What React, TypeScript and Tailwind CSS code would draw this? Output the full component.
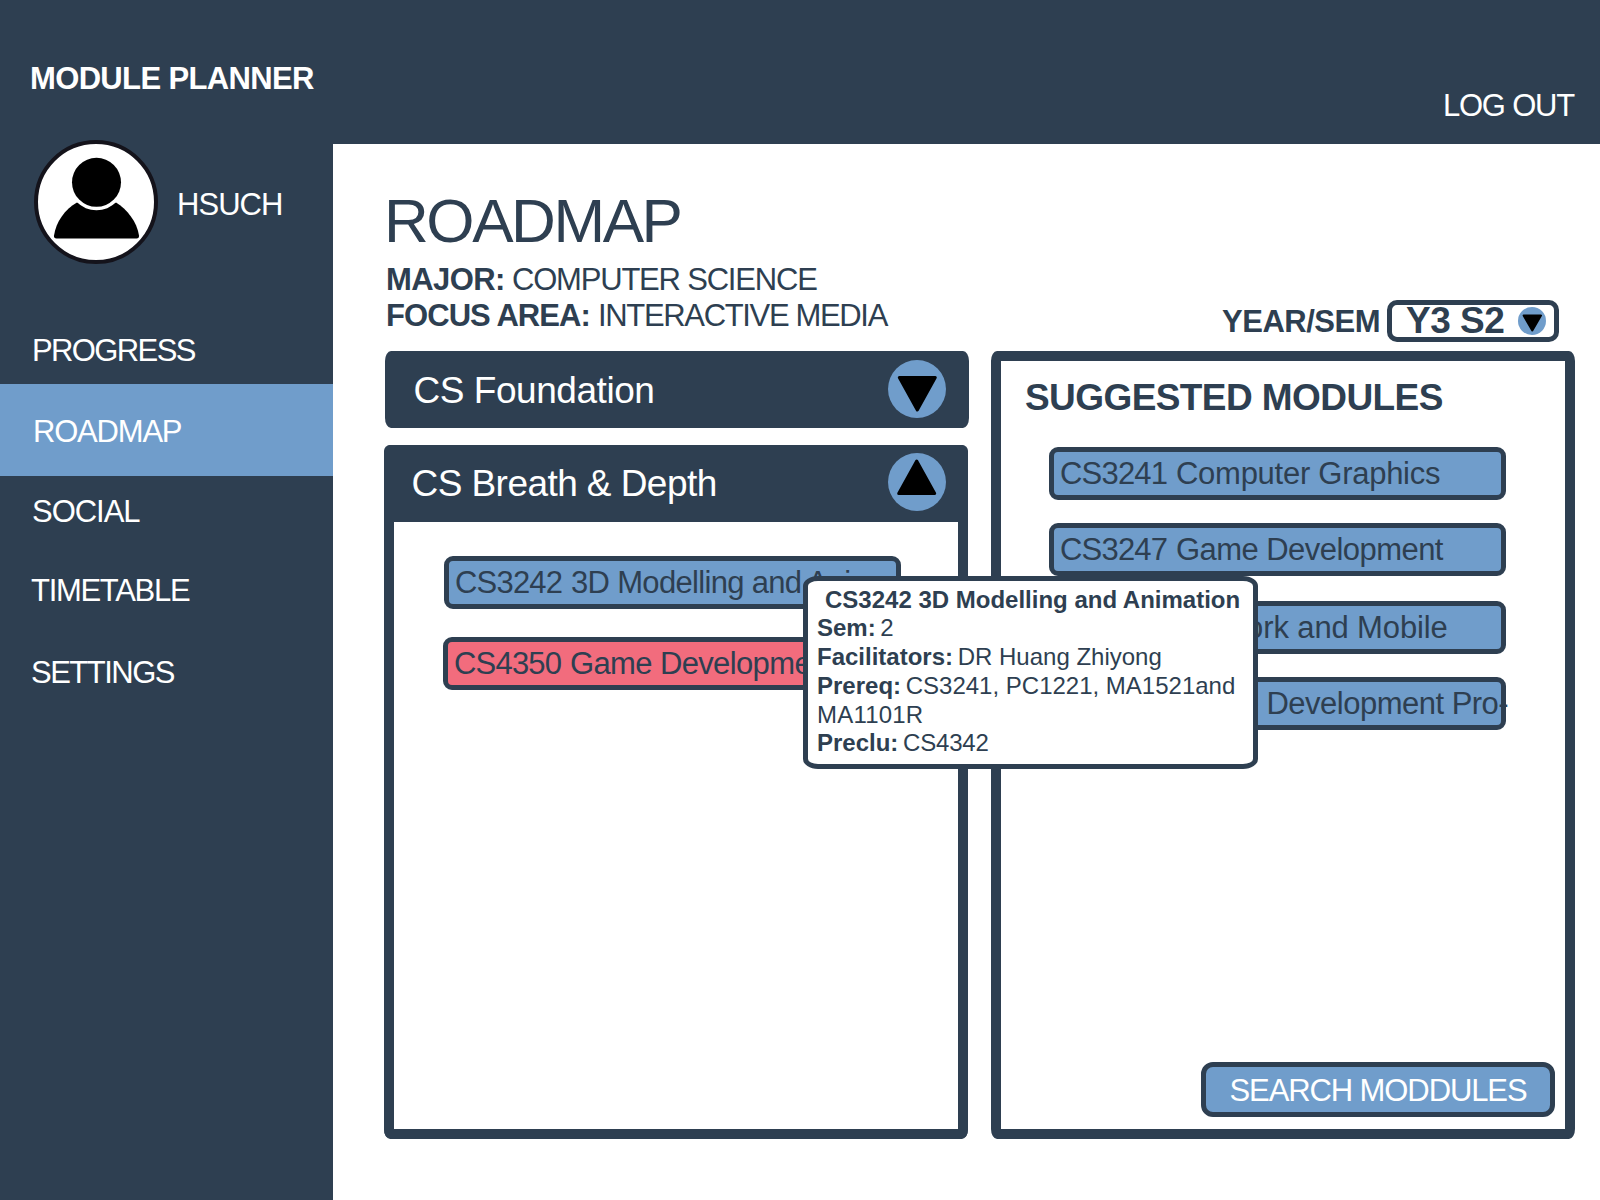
import type { ReactNode } from 'react';

type NavItem = { label: string; box: string; active?: boolean };

const navItems: NavItem[] = [
  { label: 'PROGRESS', box: 'h-[76px] pt-[27px] pl-[32px] tracking-[-1.62px]' },
  { label: 'ROADMAP', box: 'h-[92px] pt-[32px] pl-[33px] tracking-[-1.2px]', active: true },
  { label: 'SOCIAL', box: 'h-[79px] pt-[20px] pl-[32px] tracking-[-1.02px]' },
  { label: 'TIMETABLE', box: 'h-[80px] pt-[20px] pl-[31px] tracking-[-1.3px]' },
  { label: 'SETTINGS', box: 'h-[80px] pt-[22px] pl-[31px] tracking-[-1.5px]' },
];

function Avatar() {
  return (
    <svg viewBox="0 0 124 124" className="h-[124px] w-[124px] shrink-0">
      <circle cx="62" cy="62" r="60" fill="#fff" stroke="#14131b" strokeWidth="4" />
      <path
        d="M20 95.500 C22 82 31 69 43 62.500 H82 C93 69 103 82 105 95.500 Q105.300 98.500 102.500 98.500 H22.500 Q19.700 98.500 20 95.500 Z"
        fill="#000"
      />
      <circle cx="62.500" cy="42.300" r="28" fill="#fff" />
      <circle cx="62.500" cy="42.300" r="24.500" fill="#000" />
    </svg>
  );
}

function ArrowBadge({ up = false, className }: { up?: boolean; className: string }) {
  return (
    <svg viewBox="0 0 58 58" className={className}>
      <circle cx="29" cy="29" r="29" fill="#709dcb" />
      <path
        d={up ? 'M28.700 8 L46.700 40.500 H10.700 Z' : 'M29.300 50 L47.300 17.500 H11.300 Z'}
        fill="#000"
        stroke="#000"
        strokeWidth="3"
        strokeLinejoin="round"
      />
    </svg>
  );
}

function ModuleCard({ code, title, className }: { code: string; title: string; className: string }) {
  return (
    <div
      className={`flex h-[53px] w-[457px] shrink-0 rounded-[9px] border-5 border-[#2e3f51] pt-[6px] pl-[6px] text-[31px] leading-[31px] whitespace-pre ${className}`}
    >
      <span className="w-[116px] shrink-0 tracking-[-0.8px]">{code}</span>
      <span>{title}</span>
    </div>
  );
}

function Fact({ label, children }: { label: string; children: ReactNode }) {
  return (
    <p>
      <b className="-mr-[2px]">{label}</b> {children}
    </p>
  );
}

function ModuleTooltip() {
  return (
    <div className="absolute top-[225px] left-[419px] h-[193px] w-[455px] rounded-[15px/10px] border-5 border-[#2e3f51] bg-white pt-[4.700px] pl-[9px] text-[24px] leading-[28.750px] whitespace-pre">
      <p className="pl-[8px] font-bold">CS3242 3D Modelling and Animation</p>
      <Fact label="Sem:">2</Fact>
      <Fact label="Facilitators:">DR Huang Zhiyong</Fact>
      <Fact label="Prereq:">
        CS3241, PC1221, MA1521and
        <br />
        <span className="tracking-[0.2px]">MA1101R</span>
      </Fact>
      <Fact label="Preclu:">
        <span className="tracking-[-0.2px]">CS4342</span>
      </Fact>
    </div>
  );
}

function Sidebar() {
  return (
    <aside className="flex w-[333px] shrink-0 flex-col bg-[#2e3f51] pt-[63px] text-[31px] leading-[31px] text-white">
      <h1 className="pl-[30px] font-bold tracking-[-0.65px]">MODULE PLANNER</h1>
      <div className="mt-[46px] flex items-center gap-[19px] pl-[34px]">
        <Avatar />
        <span className="pt-[4px] tracking-[-0.96px]">HSUCH</span>
      </div>
      <nav className="mt-[44px] flex flex-col">
        {navItems.map((item) => (
          <a key={item.label} className={`${item.box} ${item.active ? 'bg-[#709dcb]' : ''}`}>
            {item.label}
          </a>
        ))}
      </nav>
    </aside>
  );
}

function PageHeading() {
  return (
    <div className="flex h-[207px] justify-between pr-[41px]">
      <div className="pt-[46px]">
        <h2 className="text-[62px] leading-[62px] tracking-[-2.42px]">ROADMAP</h2>
        <div className="mt-[10px] ml-[2px] text-[31px] leading-[36px] whitespace-nowrap">
          <p className="flex">
            <b className="w-[126px] tracking-[-0.6px]">MAJOR:</b>
            <span className="tracking-[-1.2px]">COMPUTER SCIENCE</span>
          </p>
          <p className="flex">
            <b className="w-[212px] tracking-[-0.93px]">FOCUS AREA:</b>
            <span className="tracking-[-1.34px]">INTERACTIVE MEDIA</span>
          </p>
        </div>
      </div>
      <div className="flex items-start pt-[156px] font-bold">
        <span className="mt-[6px] mr-[7px] text-[31px] leading-[31px] tracking-[-0.5px]">YEAR/SEM</span>
        <div className="flex h-[42px] w-[172px] items-start justify-between rounded-[10px] border-5 border-[#2e3f51] pr-[8px] pl-[14px]">
          <span className="-mt-[3px] text-[37px] leading-[37px] tracking-[-0.5px] whitespace-nowrap">Y3 S2</span>
          <svg viewBox="0 0 28 28" className="mt-[2px] h-[28px] w-[28px]">
            <circle cx="14" cy="14" r="14" fill="#709dcb" />
            <path d="M14.300 23.500 L23 8.500 H5.600 Z" fill="#000" stroke="#000" strokeWidth="2" strokeLinejoin="round" />
          </svg>
        </div>
      </div>
    </div>
  );
}

export default function App() {
  return (
    <div className="flex h-[1200px] w-[1600px] overflow-hidden bg-white font-['Liberation_Sans',Arial,sans-serif] text-[#2e3f51]">
      <Sidebar />
      <div className="flex flex-1 flex-col">
        <header className="flex h-[144px] shrink-0 justify-end bg-[#2e3f51] pt-[90px] pr-[26px] text-[31px] leading-[31px] tracking-[-1.2px] text-white">
          <a>LOG OUT</a>
        </header>
        <main className="flex flex-1 flex-col pl-[51px]">
          <PageHeading />
          <div className="relative flex h-[788px] gap-[22px]">
            <div className="flex w-[585px] flex-col gap-[17px]">
              <section className="ml-[1px] flex h-[77px] shrink-0 items-start justify-between rounded-[6px/10px] bg-[#2e3f51] pt-[9px] pr-[23px] pl-[28.500px] text-white">
                <h3 className="mt-[12px] text-[37px] leading-[37px] tracking-[-0.45px]">CS Foundation</h3>
                <ArrowBadge className="h-[58px] w-[58px]" />
              </section>
              <section className="w-[584px] flex-1 rounded-[6px/10px] border-10 border-t-0 border-[#2e3f51]">
                <div className="-mx-[10px] flex h-[77px] items-start justify-between rounded-t-[6px] bg-[#2e3f51] pt-[8px] pr-[22px] pl-[27.500px] text-white">
                  <h3 className="mt-[12px] text-[37px] leading-[37px] tracking-[-0.56px]">CS Breath &amp; Depth</h3>
                  <ArrowBadge up className="h-[58px] w-[58px]" />
                </div>
                <div className="flex flex-col gap-[28px] pt-[34px] pl-[49px]">
                  <ModuleCard
                    code="CS3242"
                    title="3D Modelling and Anima-"
                    className="ml-[1px] bg-[#709dcb] tracking-[-0.68px]"
                  />
                  <ModuleCard
                    code="CS4350"
                    title="Game Development Pro-"
                    className="bg-[#f26c7d] tracking-[-0.63px]"
                  />
                </div>
              </section>
            </div>
            <section className="flex w-[584px] flex-col rounded-[6px/10px] border-10 border-[#2e3f51] pt-[18px] pr-[10px] pb-[12px]">
              <h3 className="pl-[24px] text-[37px] leading-[37px] font-bold tracking-[-0.58px]">SUGGESTED MODULES</h3>
              <div className="mt-[31px] flex flex-col pl-[48px]">
                <ModuleCard code="CS3241" title="Computer Graphics" className="mb-[23px] bg-[#709dcb] tracking-[-0.27px]" />
                <ModuleCard code="CS3247" title="Game Development" className="mb-[25px] bg-[#709dcb] tracking-[-0.55px]" />
                <ModuleCard code="CS4344" title="Network and Mobile" className="mb-[23px] bg-[#709dcb] tracking-[-0.13px]" />
                <ModuleCard code="CS4350" title="Game Development Pro-" className="bg-[#709dcb] tracking-[-0.51px]" />
              </div>
              <button className="mt-auto flex h-[55px] w-[354px] justify-center self-end rounded-[12px] border-5 border-[#2e3f51] bg-[#709dcb] pt-[8px] text-[31px] leading-[31px] tracking-[-1.1px] text-white">
                SEARCH MODDULES
              </button>
            </section>
            <ModuleTooltip />
          </div>
        </main>
      </div>
    </div>
  );
}
